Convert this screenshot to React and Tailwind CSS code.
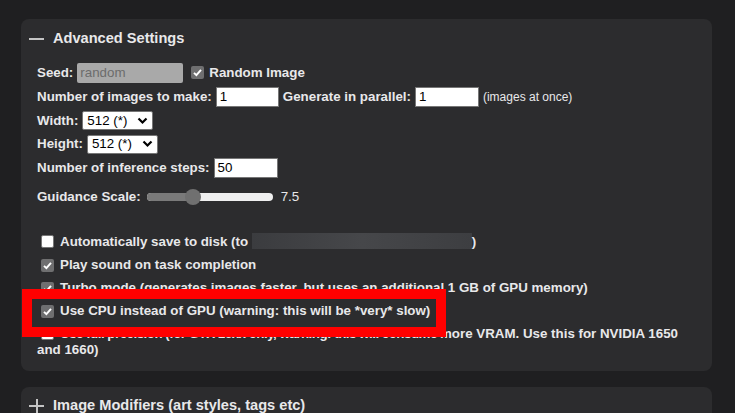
const font = { fontFamily: '"Liberation Sans", Arial, sans-serif' };

function Check({ checked }) {
  if (!checked) {
    return (
      <span className="ml-[4px] mr-[6px] inline-block h-[13px] w-[13px] shrink-0 rounded-[2px] border border-[#767676] bg-white" />
    );
  }
  return (
    <span className="ml-[4px] mr-[6px] inline-flex h-[13px] w-[13px] shrink-0 items-center justify-center rounded-[2px] bg-[#6f6f70]">
      <svg width="11" height="11" viewBox="0 0 11 11">
        <path d="M2 5.8 L4.4 8.2 L9 2.8" fill="none" stroke="#fff" strokeWidth="1.9" />
      </svg>
    </span>
  );
}

function TextBox({ value, w }) {
  return (
    <span
      className={`mx-[4px] inline-flex h-[20px] items-center border border-[#767676] bg-white pl-[3px] text-[13.33px] font-normal text-black ${w}`}
    >
      {value}
    </span>
  );
}

function Select({ value }) {
  return (
    <span className="mx-[4px] inline-flex h-[19px] w-[71px] items-center justify-between rounded-[2px] border border-[#767676] bg-white pl-[4px] pr-[4px] text-[13.33px] font-normal text-black">
      {value}
      <svg width="11" height="8" viewBox="0 0 11 8">
        <path d="M1.5 1.5 L5.5 5.5 L9.5 1.5" fill="none" stroke="#000" strokeWidth="2.2" />
      </svg>
    </span>
  );
}

function Item({ checked, children }) {
  return (
    <li className="whitespace-nowrap pt-[3px] pb-[4px] leading-[16px]">
      <span className="inline-flex align-[-2px]">
        <Check checked={checked} />
      </span>
      {children}
    </li>
  );
}

export default function App() {
  return (
    <div
      className="h-[413px] w-[735px] overflow-hidden bg-[#1f1f21] pt-[19px] pl-[21px] text-[13.33px] font-bold text-[#e8e8ea]"
      style={font}
    >
      <div className="relative w-[691px] rounded-lg bg-[#2c2c2e] pb-[9px]">
        <div className="flex h-[38px] items-center pt-[2px] pl-[8px]">
          <span className="mr-[9px] block h-[2px] w-[15px] bg-[#c4c4c4]" />
          <span className="text-[14.6px]">Advanced Settings</span>
        </div>

        <div className="pl-[16px]">
          <div className="mt-[3px] flex h-[25px] items-center">
            <span>Seed:</span>
            <span className="mx-[4px] inline-flex h-[20px] w-[106px] items-center rounded-[2px] bg-[#a9a9a9] pl-[3px] font-normal text-[#6c6c6c]">
              random
            </span>
            <Check checked />
            <span className="-ml-[1px]">Random Image</span>
          </div>
          <div className="flex h-[24px] items-center">
            <span>Number of images to make:</span>
            <TextBox value="1" w="w-[63px]" />
            <span>Generate in parallel:</span>
            <TextBox value="1" w="w-[64px]" />
            <span className="text-[12px] font-normal">(images at once)</span>
          </div>
          <div className="flex h-[23px] items-center">
            <span>Width:</span>
            <Select value="512 (*)" />
          </div>
          <div className="flex h-[24px] items-center">
            <span>Height:</span>
            <Select value="512 (*)" />
          </div>
          <div className="flex h-[24px] items-center">
            <span>Number of inference steps:</span>
            <TextBox value="50" w="w-[64px]" />
          </div>
          <div className="mt-[5px] flex h-[24px] items-center">
            <span>Guidance Scale:</span>
            <span className="relative mx-[6px] block h-[8px] w-[126px] rounded-full bg-[#efefef]">
              <span className="absolute left-0 top-0 block h-[8px] w-[46px] rounded-full bg-[#7a7a7a]" />
              <span className="absolute left-[38px] top-[-4px] block h-[16px] w-[16px] rounded-full bg-[#707070]" />
            </span>
            <span className="ml-[2px] font-normal">7.5</span>
          </div>

          <ul className="mt-[21px]">
            <Item checked={false}>
              Automatically save to disk (to{" "}
              <span className="inline-block h-[16px] w-[220px] bg-gradient-to-r from-[#3b3c3f] via-[#46474a] to-[#3d3e41] align-[-3px]" />
              )
            </Item>
            <Item checked>Play sound on task completion</Item>
            <Item checked>
              Turbo mode (generates images faster, but uses an additional 1 GB of GPU memory)
            </Item>
            <Item checked>Use CPU instead of GPU (warning: this will be *very* slow)</Item>
            <Item checked={false}>
              <span className="tracking-[-0.5px]">
                Use full precision (for GTX 16xx only, warning: this will consume{" "}
              </span>
              more VRAM. Use this for NVIDIA 1650
              <br />
              and 1660)
            </Item>
          </ul>
        </div>

        <div className="pointer-events-none absolute left-[1px] top-[270px] z-10 h-[48px] w-[424px] border-[10px] border-[#ff0000]" />
      </div>

      <div className="mt-[16px] h-[60px] w-[691px] rounded-lg bg-[#2c2c2e]">
        <div className="flex h-[38px] items-center pl-[8px]">
          <span className="relative mr-[9px] block h-[15px] w-[15px]">
            <span className="absolute left-0 top-[6px] block h-[2px] w-[15px] bg-[#c4c4c4]" />
            <span className="absolute left-[7px] top-0 block h-[15px] w-[2px] bg-[#c4c4c4]" />
          </span>
          <span className="text-[14.6px]">Image Modifiers (art styles, tags etc)</span>
        </div>
      </div>
    </div>
  );
}
